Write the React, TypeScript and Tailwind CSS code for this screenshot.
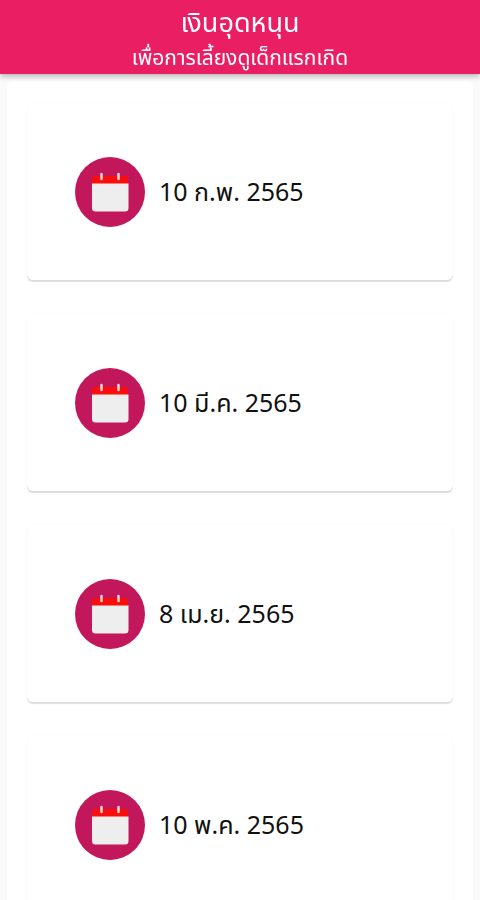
import React from 'react';

const payments = [
  { id: 1, date: '10 ก.พ. 2565' },
  { id: 2, date: '10 มี.ค. 2565' },
  { id: 3, date: '8 เม.ย. 2565' },
  { id: 4, date: '10 พ.ค. 2565' },
];

function CalendarIcon() {
  return (
    <svg viewBox="0 0 70 70" className="h-[70px] w-[70px] shrink-0" aria-hidden="true">
      <circle cx="35" cy="35" r="35" fill="#c2185b" />
      <path d="M17 27V22a3 3 0 0 1 3-3h30a3 3 0 0 1 3 3v5z" fill="#f90d0d" />
      <path d="M17 26.500h36.500V51a3.500 3.500 0 0 1-3.500 3.500H20.500A3.500 3.500 0 0 1 17 51z" fill="#eeeeee" />
      <path d="M26.500 17v5M43.500 17v5" stroke="#f6d5d0" strokeWidth="2.500" strokeLinecap="round" />
    </svg>
  );
}

function PaymentCard({ date }: { date: string }) {
  return (
    <li className="flex h-[177px] shrink-0 items-center gap-3.5 rounded-md bg-white px-12 shadow-[0_2px_1px_rgba(0,0,0,0.13),0_0_2px_rgba(0,0,0,0.03)]">
      <CalendarIcon />
      <p className="pt-0.5 text-[25px] leading-9 text-[#111111]">{date}</p>
    </li>
  );
}

export default function App() {
  return (
    <div className="flex h-screen flex-col bg-[#fafafa] font-['Noto_Sans_Thai','Noto_Sans',sans-serif]">
      <header className="z-10 flex flex-col items-center bg-[#e91e63] pt-1 text-white shadow-[0_2px_6px_rgba(0,0,0,0.3)]">
        <h1 className="text-[27px] leading-10">เงินอุดหนุน</h1>
        <p className="text-[21px] leading-[30px]">เพื่อการเลี้ยงดูเด็กแรกเกิด</p>
      </header>

      <main className="mx-[7px] mt-[7px] min-h-0 flex-1 overflow-y-auto rounded-t-md bg-white [scrollbar-width:none]">
        <ul className="flex flex-col gap-[34px] px-5 py-[22px]">
          {payments.map((payment) => (
            <PaymentCard key={payment.id} date={payment.date} />
          ))}
        </ul>
      </main>
    </div>
  );
}
